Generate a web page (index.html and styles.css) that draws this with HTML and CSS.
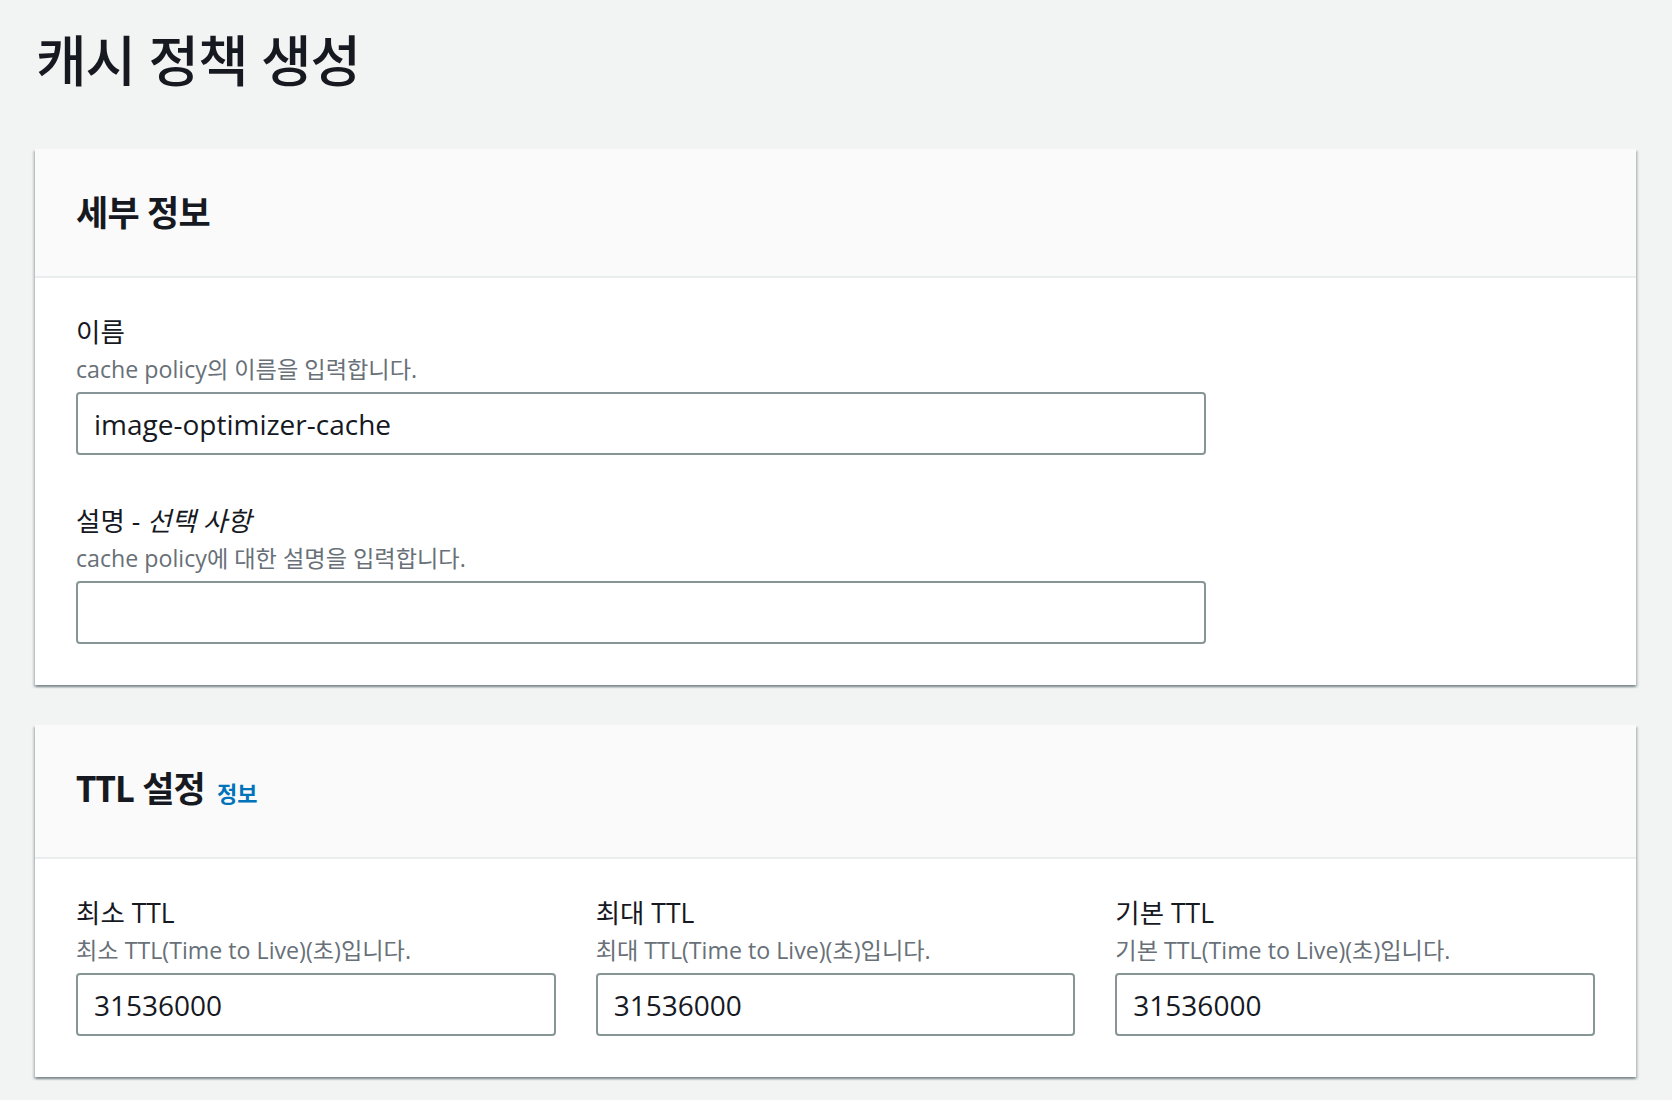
FILE: index.html
```html
<!DOCTYPE html>
<html lang="ko">
<head>
<meta charset="utf-8">
<title>캐시 정책 생성</title>
<link rel="stylesheet" href="styles.css">
</head>
<body>
<main class="page">
  <h1 class="page-title">캐시 정책 생성</h1>

  <section class="container">
    <header class="container-header">
      <h2 class="container-title">세부 정보</h2>
    </header>
    <div class="container-body stack">
      <div class="field field-wide">
        <label class="field-label" for="policy-name">이름</label>
        <p class="field-desc">cache policy의 이름을 입력합니다.</p>
        <input class="text-input" id="policy-name" type="text" value="image-optimizer-cache">
      </div>
      <div class="field field-wide">
        <label class="field-label" for="policy-desc">설명 - <i>선택 사항</i></label>
        <p class="field-desc">cache policy에 대한 설명을 입력합니다.</p>
        <input class="text-input" id="policy-desc" type="text" value="">
      </div>
    </div>
  </section>

  <section class="container">
    <header class="container-header">
      <h2 class="container-title">TTL 설정<a class="info-link" href="#">정보</a></h2>
    </header>
    <div class="container-body ttl-grid">
      <div class="field">
        <label class="field-label" for="ttl-min">최소 TTL</label>
        <p class="field-desc">최소 TTL(Time to Live)(초)입니다.</p>
        <input class="text-input" id="ttl-min" type="text" value="31536000">
      </div>
      <div class="field">
        <label class="field-label" for="ttl-max">최대 TTL</label>
        <p class="field-desc">최대 TTL(Time to Live)(초)입니다.</p>
        <input class="text-input" id="ttl-max" type="text" value="31536000">
      </div>
      <div class="field">
        <label class="field-label" for="ttl-default">기본 TTL</label>
        <p class="field-desc">기본 TTL(Time to Live)(초)입니다.</p>
        <input class="text-input" id="ttl-default" type="text" value="31536000">
      </div>
    </div>
  </section>
</main>
</body>
</html>
```

FILE: styles.css
```css
* {
  box-sizing: border-box;
}

html,
body {
  margin: 0;
  padding: 0;
}

body {
  background: #f2f3f3;
  color: #16191f;
  font-family: "Open Sans", "Noto Sans CJK KR", sans-serif;
}

.page {
  padding: 29px 36px 0 35px;
}

.page-title {
  margin: 0 0 58px;
  padding-left: 1px;
  font-size: 55px;
  line-height: 62px;
  font-weight: 500;
  letter-spacing: -1px;
  color: #16191f;
}

.container {
  background: #ffffff;
  margin-bottom: 40px;
  box-shadow: 0 2px 2px 0 rgba(0, 28, 36, 0.3),
    2px 2px 2px 0 rgba(0, 28, 36, 0.15),
    -2px 2px 2px 0 rgba(0, 28, 36, 0.15);
}

.container:last-child {
  margin-bottom: 16px;
}

.container-header {
  background: #fafafa;
  border-bottom: 2px solid #eaeded;
  padding: 40px 41px;
}

.container-title {
  margin: 0;
  font-size: 35px;
  line-height: 47px;
  font-weight: 700;
  letter-spacing: -0.8px;
  color: #16191f;
}

.info-link {
  margin-left: 12px;
  font-size: 22px;
  font-weight: 700;
  letter-spacing: 0;
  color: #0073bb;
  text-decoration: none;
}

.container-body {
  padding: 38px 41px 41px;
}

.stack > .field + .field {
  margin-top: 50px;
}

.field-wide {
  width: 1130px;
}

.field-label {
  display: block;
  font-size: 26.5px;
  line-height: 33px;
  font-weight: 400;
  color: #16191f;
}

.field-label i {
  font-style: italic;
}

.field-desc {
  margin: 5px 0 0;
  font-size: 23.2px;
  line-height: 31px;
  color: #687078;
}

.text-input {
  display: block;
  width: 100%;
  height: 63px;
  margin: 7px 0 0;
  padding: 0 16px;
  border: 2px solid #879596;
  border-radius: 4px;
  background: #ffffff;
  font-family: inherit;
  font-size: 28px;
  color: #16191f;
  outline: none;
}

.ttl-grid {
  display: grid;
  grid-template-columns: repeat(3, 1fr);
  column-gap: 40px;
}
```
